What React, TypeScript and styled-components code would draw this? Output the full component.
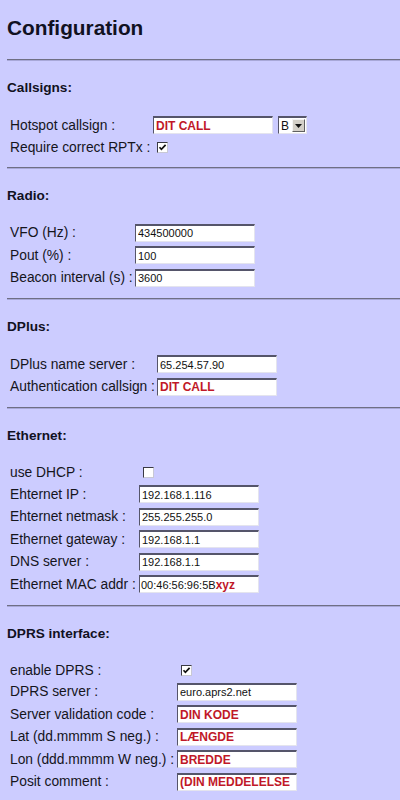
import styled, { createGlobalStyle, css } from 'styled-components';

const GlobalStyle = createGlobalStyle`
  html, body {
    margin: 0;
    padding: 0;
    background: #ccccff;
  }
  body {
    font-family: "Liberation Sans", Arial, sans-serif;
    color: #111118;
  }
`;

const Page = styled.div`
  padding: 16px 0 20px 7px;
`;

const Title = styled.h1`
  margin: 0 0 19px;
  font-size: 20.8px;
  line-height: 24px;
  font-weight: bold;
  color: #111122;
`;

const Section = styled.section`
  padding-bottom: 9px;
`;

const Rule = styled.hr`
  margin: 0;
  height: 0;
  border: 0;
  border-top: 1px solid #6f6f84;
  border-bottom: 1px solid #a8a8d8;
`;

const Heading = styled.h4`
  margin: 19px 0 18px;
  font-size: 13.6px;
  line-height: 16px;
  font-weight: bold;
  color: #111122;
`;

const Row = styled.div<{ $labelWidth: number; $compact?: boolean }>`
  display: grid;
  grid-template-columns: ${p => p.$labelWidth}px max-content;
  align-items: center;
  height: ${p => (p.$compact ? 21 : 22.5)}px;
  margin-left: 3px;
`;

const Label = styled.span`
  font-size: 13.8px;
  white-space: nowrap;
  color: #15151c;
`;

const Cell = styled.div`
  display: flex;
  align-items: center;
  gap: 5px;
`;

const boxStyle = css`
  box-sizing: border-box;
  width: 120px;
  height: 18px;
  margin: 0;
  padding: 0 2px;
  background: #ffffff;
  border-style: solid;
  border-width: 2px 1px 1px 1px;
  border-color: #55556a #e4e4ee #e4e4ee #55556a;
  font-family: "Liberation Sans", Arial, sans-serif;
  font-size: 11px;
  color: #111;
  outline: none;
`;

const TextInput = styled.input<{ $red?: boolean }>`
  ${boxStyle}
  ${p =>
    p.$red &&
    css`
      font-size: 12px;
      font-weight: bold;
      color: #c01828;
    `}
`;

const MixedBox = styled.div`
  ${boxStyle}
  display: flex;
  align-items: center;
  padding: 0 1px;
  white-space: nowrap;
  overflow: hidden;
`;

const RedPart = styled.span`
  font-size: 12px;
  font-weight: bold;
  color: #c01828;
`;

const SelectBox = styled.div`
  ${boxStyle}
  width: 29px;
  display: flex;
  align-items: center;
  justify-content: space-between;
  padding: 0 1px 0 2px;
  font-size: 12px;
`;

const SelectButton = styled.span`
  box-sizing: border-box;
  width: 13px;
  height: 13px;
  display: flex;
  align-items: center;
  justify-content: center;
  background: #d4d0c8;
  border-style: solid;
  border-width: 1px;
  border-color: #f4f4f4 #606060 #606060 #f4f4f4;
`;

const CheckBox = styled.span`
  box-sizing: border-box;
  width: 11px;
  height: 11px;
  margin-left: 4px;
  display: flex;
  align-items: center;
  justify-content: center;
  background: #ffffff;
  border-style: solid;
  border-width: 1px;
  border-color: #3a3a44 #c8c8d4 #c8c8d4 #3a3a44;
`;

type Field =
  | { kind: 'text'; label: string; value: string; red?: boolean }
  | { kind: 'mac'; label: string; value: string; suffix: string }
  | { kind: 'check'; label: string; checked: boolean }
  | { kind: 'callsign'; label: string; value: string; module: string };

type SectionData = { title: string; labelWidth: number; fields: Field[] };

const sections: SectionData[] = [
  {
    title: 'Callsigns:',
    labelWidth: 143,
    fields: [
      { kind: 'callsign', label: 'Hotspot callsign :', value: 'DIT CALL', module: 'B' },
      { kind: 'check', label: 'Require correct RPTx :', checked: true },
    ],
  },
  {
    title: 'Radio:',
    labelWidth: 125,
    fields: [
      { kind: 'text', label: 'VFO (Hz) :', value: '434500000' },
      { kind: 'text', label: 'Pout (%) :', value: '100' },
      { kind: 'text', label: 'Beacon interval (s) :', value: '3600' },
    ],
  },
  {
    title: 'DPlus:',
    labelWidth: 147,
    fields: [
      { kind: 'text', label: 'DPlus name server :', value: '65.254.57.90' },
      { kind: 'text', label: 'Authentication callsign :', value: 'DIT CALL', red: true },
    ],
  },
  {
    title: 'Ethernet:',
    labelWidth: 129,
    fields: [
      { kind: 'check', label: 'use DHCP :', checked: false },
      { kind: 'text', label: 'Ehternet IP :', value: '192.168.1.116' },
      { kind: 'text', label: 'Ehternet netmask :', value: '255.255.255.0' },
      { kind: 'text', label: 'Ethernet gateway :', value: '192.168.1.1' },
      { kind: 'text', label: 'DNS server :', value: '192.168.1.1' },
      { kind: 'mac', label: 'Ethernet MAC addr :', value: '00:46:56:96:5B', suffix: 'xyz' },
    ],
  },
  {
    title: 'DPRS interface:',
    labelWidth: 167,
    fields: [
      { kind: 'check', label: 'enable DPRS :', checked: true },
      { kind: 'text', label: 'DPRS server :', value: 'euro.aprs2.net' },
      { kind: 'text', label: 'Server validation code :', value: 'DIN KODE', red: true },
      { kind: 'text', label: 'Lat (dd.mmmm S neg.) :', value: 'LÆNGDE', red: true },
      { kind: 'text', label: 'Lon (ddd.mmmm W neg.) :', value: 'BREDDE', red: true },
      { kind: 'text', label: 'Posit comment :', value: '(DIN MEDDELELSE', red: true },
    ],
  },
];

function Check({ checked }: { checked: boolean }) {
  return (
    <CheckBox>
      {checked && (
        <svg width="9" height="9" viewBox="0 0 9 9">
          <path d="M1.5 4.2 L3.4 6.3 L7.6 1.8" fill="none" stroke="#111" strokeWidth="1.7" />
        </svg>
      )}
    </CheckBox>
  );
}

function FieldControl({ field }: { field: Field }) {
  switch (field.kind) {
    case 'check':
      return <Check checked={field.checked} />;
    case 'mac':
      return (
        <MixedBox>
          {field.value}
          <RedPart>{field.suffix}</RedPart>
        </MixedBox>
      );
    case 'callsign':
      return (
        <>
          <TextInput $red readOnly defaultValue={field.value} />
          <SelectBox>
            <span>{field.module}</span>
            <SelectButton>
              <svg width="7" height="4" viewBox="0 0 7 4">
                <path d="M0 0 H7 L3.5 4 Z" fill="#111" />
              </svg>
            </SelectButton>
          </SelectBox>
        </>
      );
    default:
      return <TextInput $red={field.red} readOnly defaultValue={field.value} />;
  }
}

export default function App() {
  return (
    <>
      <GlobalStyle />
      <Page>
        <Title>Configuration</Title>
        {sections.map(section => (
          <Section key={section.title}>
            <Rule />
            <Heading>{section.title}</Heading>
            {section.fields.map(field => (
              <Row key={field.label} $labelWidth={section.labelWidth} $compact={field.kind === 'check'}>
                <Label>{field.label}</Label>
                <Cell>
                  <FieldControl field={field} />
                </Cell>
              </Row>
            ))}
          </Section>
        ))}
      </Page>
    </>
  );
}
